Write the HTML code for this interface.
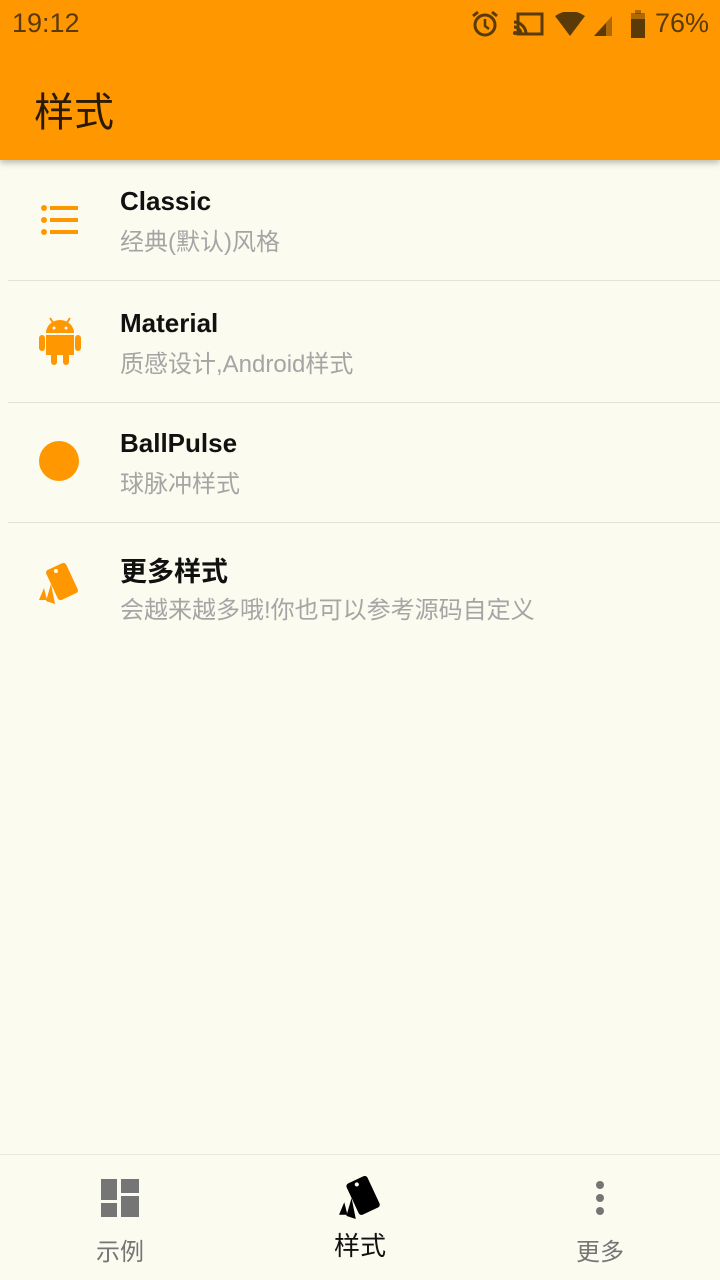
<!DOCTYPE html>
<html><head><meta charset="utf-8"><style>
*{margin:0;padding:0;box-sizing:border-box}
body{width:720px;height:1280px;background:#fcfbef;font-family:"Liberation Sans","Noto Sans CJK SC",sans-serif;position:relative;overflow:hidden}
.top{position:absolute;left:0;top:0;width:720px;height:160px;background:#ff9800;box-shadow:0 3px 6px rgba(0,0,0,.25)}
.st{position:absolute;top:8px;font-size:27px;color:#5a3a08}
.title{position:absolute;left:34px;top:80px;font-size:40px;color:#2a1a00}
.ic{position:absolute;left:38px}
.t{position:absolute;left:120px;font-size:26px;font-weight:bold;color:#111}
.s{position:absolute;left:120px;font-size:24px;color:#a5a5a5}
.sep{position:absolute;left:8px;right:0;height:1px;background:#e6e3d6}
.nav{position:absolute;font-size:24px;text-align:center;width:120px}
</style></head><body>
<div class="top">
<div class="st" style="left:12px">19:12</div>
<svg style="position:absolute;left:470px;top:10px" width="30" height="28" viewBox="0 0 30 28"><circle cx="15" cy="15" r="10" fill="none" stroke="#5a3a08" stroke-width="3"/><path d="M15 9v7l4 3" stroke="#5a3a08" stroke-width="2.5" fill="none"/><path d="M3 6l5-4M27 6l-5-4" stroke="#5a3a08" stroke-width="3"/></svg>
<svg style="position:absolute;left:512px;top:12px" width="32" height="24" viewBox="0 0 32 24"><rect x="6" y="2" width="24" height="20" fill="none" stroke="#5a3a08" stroke-width="3"/><path d="M2 10a12 12 0 0 1 12 12M2 15a7 7 0 0 1 7 7" stroke="#5a3a08" stroke-width="3" fill="none"/><circle cx="3" cy="21" r="2" fill="#5a3a08"/></svg>
<svg style="position:absolute;left:553px;top:12px" width="34" height="24" viewBox="0 0 34 24"><path d="M2 4Q17-6 32 4L17 24Z" fill="#5a3a08"/></svg>
<svg style="position:absolute;left:592px;top:14px" width="24" height="24" viewBox="0 0 24 24"><path d="M2 22L20 2v20Z" fill="#5a3a08" opacity=".5"/><path d="M2 22L14 9v13Z" fill="#5a3a08"/></svg>
<svg style="position:absolute;left:630px;top:10px" width="16" height="28" viewBox="0 0 16 28"><rect x="5" y="0" width="6" height="4" fill="#5a3a08" opacity=".5"/><rect x="1" y="3" width="14" height="6" fill="#5a3a08" opacity=".5"/><rect x="1" y="9" width="14" height="19" fill="#5a3a08"/></svg>
<div class="st" style="left:655px">76%</div>
<div class="title">样式</div>
</div>

<div class="ic" style="top:200px"><svg width="42" height="40" viewBox="0 0 42 40"><g fill="#ff9800"><circle cx="6" cy="8" r="3"/><circle cx="6" cy="20" r="3"/><circle cx="6" cy="32" r="3"/><rect x="12" y="6" width="28" height="4"/><rect x="12" y="18" width="28" height="4"/><rect x="12" y="30" width="28" height="4"/></g></svg></div>
<div class="t" style="top:186px">Classic</div>
<div class="s" style="top:222px">经典(默认)风格</div>
<div class="sep" style="top:280px"></div>

<div class="ic" style="top:316px"><svg width="44" height="50" viewBox="0 0 44 50"><g fill="#ff9800"><path d="M8 17a14 13 0 0 1 28 0z"/><path d="M12 2l4 6M32 2l-4 6" stroke="#ff9800" stroke-width="2"/><rect x="8" y="19" width="28" height="20"/><rect x="1" y="19" width="6" height="16" rx="3"/><rect x="37" y="19" width="6" height="16" rx="3"/><rect x="13" y="36" width="6" height="13" rx="3"/><rect x="25" y="36" width="6" height="13" rx="3"/></g><circle cx="16" cy="12" r="1.5" fill="#fcfbef"/><circle cx="28" cy="12" r="1.5" fill="#fcfbef"/></svg></div>
<div class="t" style="top:308px">Material</div>
<div class="s" style="top:344px">质感设计,Android样式</div>
<div class="sep" style="top:402px"></div>

<div class="ic" style="top:440px"><svg width="42" height="42"><circle cx="21" cy="21" r="20" fill="#ff9800"/></svg></div>
<div class="t" style="top:428px">BallPulse</div>
<div class="s" style="top:464px">球脉冲样式</div>
<div class="sep" style="top:522px"></div>

<div class="ic" style="top:562px"><svg width="44" height="42" viewBox="0 0 44 42"><g fill="#ff9800"><path d="M1 38l5-12 3 12z"/><path d="M8 39l5-17 4 20z"/><rect x="13" y="3" width="22" height="33" rx="3" transform="rotate(-25 24 19.5)"/></g><circle cx="18" cy="9" r="2" fill="#fcfbef"/></svg></div>
<div class="t" style="top:550px;font-size:27px">更多样式</div>
<div class="s" style="top:590px">会越来越多哦!你也可以参考源码自定义</div>

<div style="position:absolute;left:0;top:1154px;width:720px;height:1px;background:#ece9dc"></div>
<svg style="position:absolute;left:101px;top:1179px" width="38" height="38" viewBox="0 0 38 38"><g fill="#757575"><rect x="0" y="0" width="16" height="21"/><rect x="0" y="24" width="16" height="14"/><rect x="20" y="0" width="18" height="14"/><rect x="20" y="17" width="18" height="21"/></g></svg>
<div class="nav" style="left:60px;top:1232px;color:#757575">示例</div>
<svg style="position:absolute;left:338px;top:1175px" width="46" height="44" viewBox="0 0 44 42"><g fill="#000"><path d="M1 38l5-12 3 12z"/><path d="M8 39l5-17 4 20z"/><rect x="13" y="3" width="22" height="33" rx="3" transform="rotate(-25 24 19.5)"/></g><circle cx="18" cy="9" r="2" fill="#fcfbef"/></svg>
<div class="nav" style="left:300px;top:1226px;color:#111;font-size:26px">样式</div>
<svg style="position:absolute;left:592px;top:1180px" width="16" height="38"><g fill="#757575"><circle cx="8" cy="5" r="4"/><circle cx="8" cy="18" r="4"/><circle cx="8" cy="31" r="4"/></g></svg>
<div class="nav" style="left:540px;top:1232px;color:#757575">更多</div>
</body></html>
